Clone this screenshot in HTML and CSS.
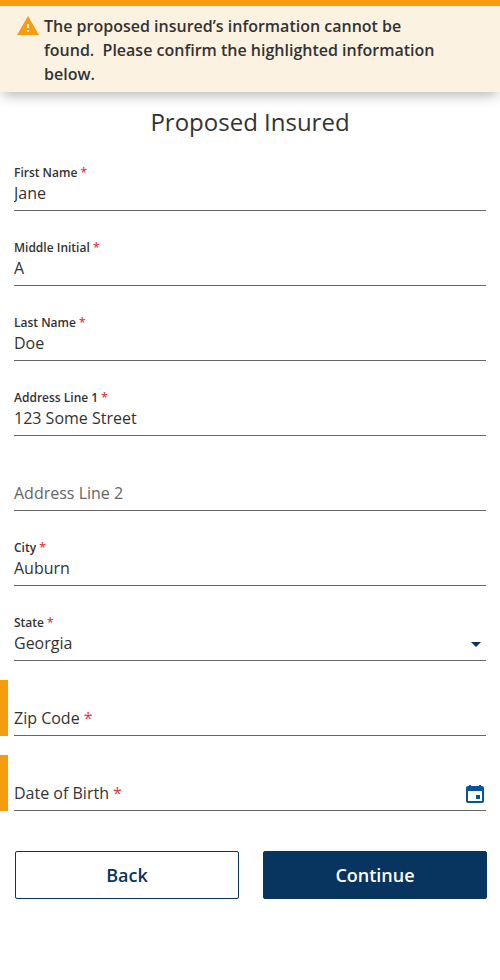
FILE: index.html
```html
<!DOCTYPE html>
<html lang="en">
<head>
<meta charset="utf-8">
<meta name="viewport" content="width=device-width, initial-scale=1">
<title>Proposed Insured</title>
<link rel="stylesheet" href="styles.css">
</head>
<body>
<div class="alert" role="alert">
  <svg class="alert-icon" viewBox="0 0 24 24" aria-hidden="true"><path d="M1 21h22L12 2 1 21zm12-3h-2v-2h2v2zm0-4h-2v-4h2v4z"/></svg>
  <p class="alert-text">The proposed insured’s information cannot be found.&nbsp; Please confirm the highlighted information below.</p>
</div>
<main>
  <h1 class="title">Proposed Insured</h1>
  <form>
    <div class="fields">
      <div class="field">
        <label for="first">First Name <span class="required">*</span></label>
        <input id="first" type="text" value="Jane">
      </div>
      <div class="field">
        <label for="middle">Middle Initial <span class="required">*</span></label>
        <input id="middle" type="text" value="A">
      </div>
      <div class="field">
        <label for="last">Last Name <span class="required">*</span></label>
        <input id="last" type="text" value="Doe">
      </div>
      <div class="field">
        <label for="address1">Address Line 1 <span class="required">*</span></label>
        <input id="address1" type="text" value="123 Some Street">
      </div>
      <div class="field field-empty field-optional">
        <label for="address2">Address Line 2</label>
        <input id="address2" type="text">
      </div>
      <div class="field">
        <label for="city">City <span class="required">*</span></label>
        <input id="city" type="text" value="Auburn">
      </div>
      <div class="field">
        <label for="state">State <span class="required">*</span></label>
        <select id="state"><option>Georgia</option></select>
        <svg class="caret" viewBox="0 0 10 5" aria-hidden="true"><path d="M0 0h10L5 5z"/></svg>
      </div>
      <div class="field field-empty field-flagged">
        <label for="zip">Zip Code <span class="required">*</span></label>
        <input id="zip" type="text">
      </div>
      <div class="field field-empty field-flagged">
        <label for="birth">Date of Birth <span class="required">*</span></label>
        <input id="birth" type="text">
        <button class="calendar" type="button" aria-label="Choose date">
          <svg viewBox="0 0 18 18" aria-hidden="true"><path fill-rule="evenodd" d="M3 0h2v1h8V0h2v1h1a2 2 0 0 1 2 2v13a2 2 0 0 1-2 2H2a2 2 0 0 1-2-2V3a2 2 0 0 1 2-2h1zM2 6v10h14V6zM10 10h4v4h-4z"/></svg>
        </button>
      </div>
    </div>
    <div class="actions">
      <button class="button" type="button">Back</button>
      <button class="button button-primary" type="submit">Continue</button>
    </div>
  </form>
</main>
</body>
</html>
```
FILE: styles.css
```css
* {
  box-sizing: border-box;
}

body {
  margin: 0;
  background: #fff;
  color: #333;
  font-family: "Open Sans", sans-serif;
  font-size: 16px;
  line-height: 24px;
}

.alert {
  display: flex;
  gap: 4px;
  padding: 8px 16px 6px;
  border-top: 6px solid #f59c11;
  background: #fcf2e1;
  box-shadow: 0 6px 12px -3px rgba(0, 0, 0, 0.3);
}

.alert-icon {
  flex: none;
  width: 24px;
  height: 24px;
  fill: #f59c11;
}

.alert-text {
  max-width: 400px;
  margin: 0;
  font-weight: 600;
}

.title {
  margin: 14px 0 17px;
  font-size: 24px;
  font-weight: 400;
  line-height: 32px;
  text-align: center;
}

.fields {
  display: grid;
  gap: 19px;
}

.field {
  display: grid;
  grid-template-columns: 1fr auto;
  grid-template-rows: 26px 30px;
  padding: 0 14px;
}

.field label {
  grid-area: 1 / 1;
  padding-top: 9px;
  font-size: 12px;
  font-weight: 600;
  line-height: 18px;
}

.field input,
.field select {
  grid-area: 2 / 1 / 3 / 3;
  width: 100%;
  min-width: 0;
  margin: 0;
  padding: 0 0 5px;
  border: 0;
  border-bottom: 1px solid #666;
  border-radius: 0;
  background: transparent;
  color: #333;
  font: inherit;
  appearance: none;
}

.field-empty label {
  grid-area: 2 / 1;
  padding-top: 0;
  font-size: 16px;
  font-weight: 400;
  line-height: 24px;
}

.field-optional label {
  color: #666;
}

.field-flagged {
  padding-left: 6px;
  border-left: 8px solid #f59c11;
}

.required {
  color: #e63535;
}

.caret {
  grid-area: 2 / 2;
  width: 10px;
  height: 5px;
  margin: 11px 5px 0 0;
  fill: #07355f;
  pointer-events: none;
}

.calendar {
  grid-area: 2 / 2;
  width: 18px;
  height: 18px;
  margin: 4px 2px 0 0;
  padding: 0;
  border: 0;
  background: none;
}

.calendar svg {
  display: block;
  fill: #05539b;
}

.actions {
  display: flex;
  gap: 24px;
  margin-top: 40px;
  padding: 0 13px 0 15px;
}

.button {
  flex: 1;
  height: 48px;
  padding: 0;
  border: 1px solid #07355f;
  border-radius: 2px;
  background: #fff;
  color: #07355f;
  font: inherit;
  font-size: 18px;
  font-weight: 600;
}

.button-primary {
  background: #07355f;
  color: #fff;
}
```
